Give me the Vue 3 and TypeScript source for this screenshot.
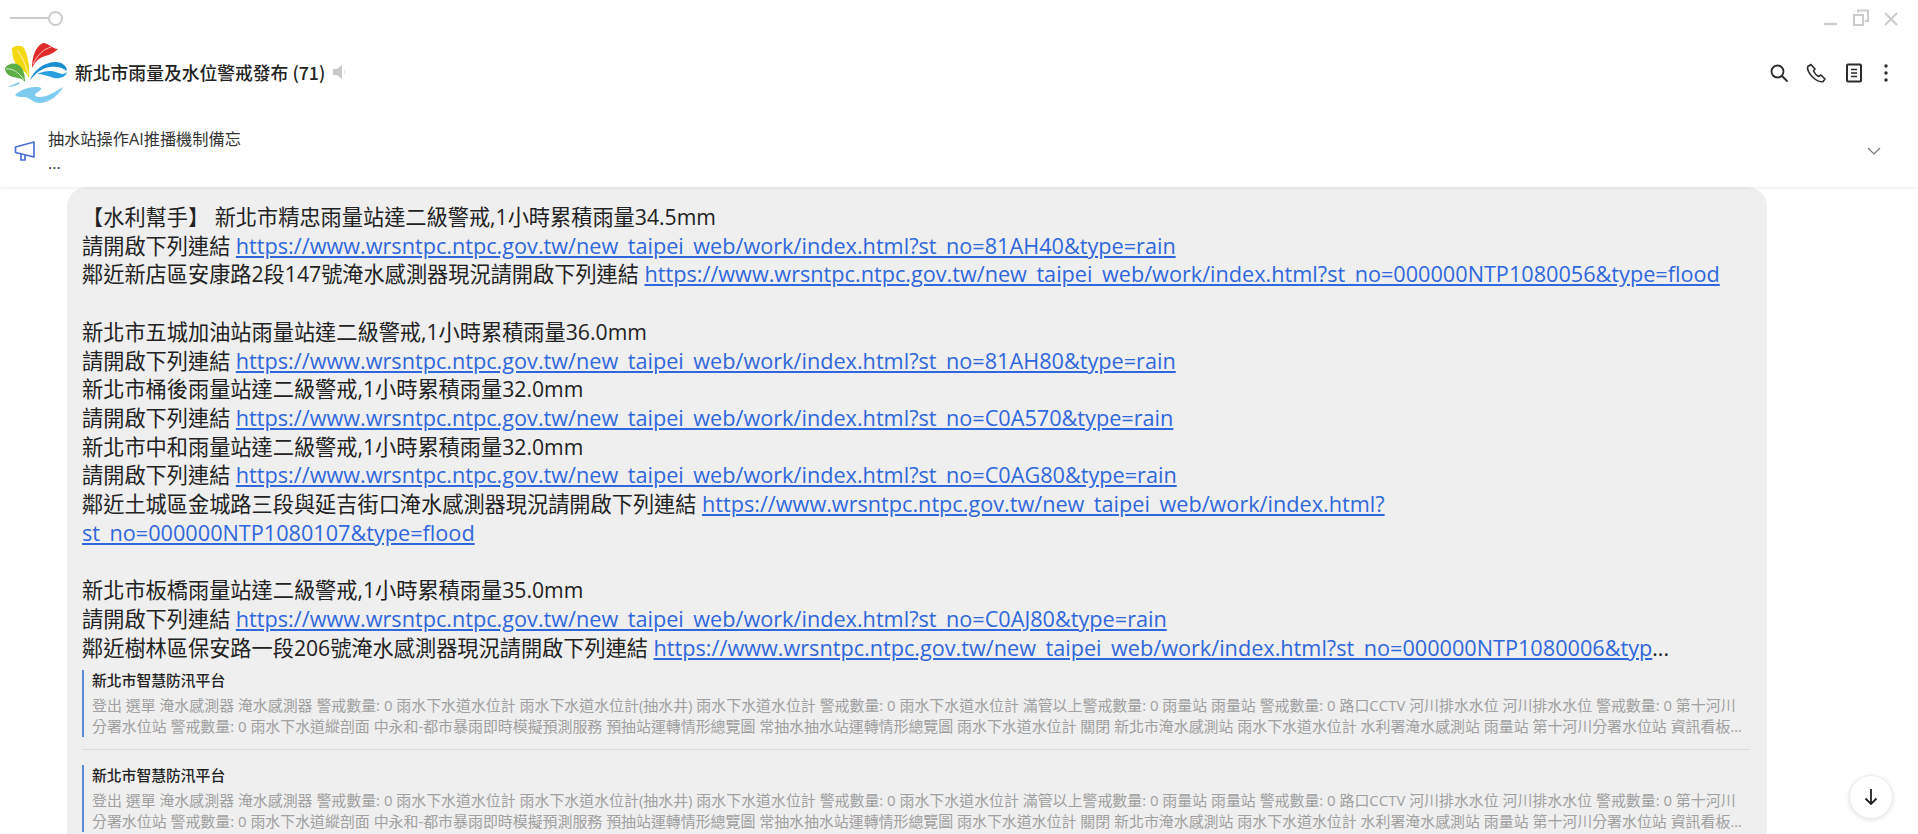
<script setup lang="ts">
const base = 'https://www.wrsntpc.ntpc.gov.tw/new_taipei_web/work/index.html?'

interface Line {
  text: string
  url?: string
  tail?: string
}

const lines: Line[] = [
  { text: '【水利幫手】 新北市精忠雨量站達二級警戒,1小時累積雨量34.5mm' },
  { text: '請開啟下列連結 ', url: base + 'st_no=81AH40&type=rain' },
  { text: '鄰近新店區安康路2段147號淹水感測器現況請開啟下列連結 ', url: base + 'st_no=000000NTP1080056&type=flood' },
  { text: '' },
  { text: '新北市五城加油站雨量站達二級警戒,1小時累積雨量36.0mm' },
  { text: '請開啟下列連結 ', url: base + 'st_no=81AH80&type=rain' },
  { text: '新北市桶後雨量站達二級警戒,1小時累積雨量32.0mm' },
  { text: '請開啟下列連結 ', url: base + 'st_no=C0A570&type=rain' },
  { text: '新北市中和雨量站達二級警戒,1小時累積雨量32.0mm' },
  { text: '請開啟下列連結 ', url: base + 'st_no=C0AG80&type=rain' },
  { text: '鄰近土城區金城路三段與延吉街口淹水感測器現況請開啟下列連結 ', url: base + 'st_no=000000NTP1080107&type=flood' },
  { text: '' },
  { text: '新北市板橋雨量站達二級警戒,1小時累積雨量35.0mm' },
  { text: '請開啟下列連結 ', url: base + 'st_no=C0AJ80&type=rain' },
  { text: '鄰近樹林區保安路一段206號淹水感測器現況請開啟下列連結 ', url: base + 'st_no=000000NTP1080006&typ', tail: '...' },
]

const previewText =
  '登出 選單 淹水感測器 淹水感測器 警戒數量: 0 雨水下水道水位計 雨水下水道水位計(抽水井) 雨水下水道水位計 警戒數量: 0 雨水下水道水位計 滿管以上警戒數量: 0 雨量站 雨量站 警戒數量: 0 路口CCTV 河川排水水位 河川排水水位 警戒數量: 0 第十河川分署水位站 警戒數量: 0 雨水下水道縱剖面 中永和-都市暴雨即時模擬預測服務 預抽站運轉情形總覽圖 常抽水抽水站運轉情形總覽圖 雨水下水道水位計 關閉 新北市淹水感測站 雨水下水道水位計 水利署淹水感測站 雨量站 第十河川分署水位站 資訊看板 河川排水水位 路口CCTV 雨水下水道水位計'

const cards = [0, 1]
</script>

<template>
  <div class="page">
    <header class="top">
      <div class="window-bar">
        <div class="slider"><span class="slider-track"></span><span class="slider-knob"></span></div>
        <div class="window-controls">
          <svg width="18" height="18" viewBox="0 0 18 18"><path d="M2 15h13" stroke="#ccc" stroke-width="2.4" fill="none" /></svg>
          <svg width="18" height="18" viewBox="0 0 18 18" fill="none" stroke="#ccc" stroke-width="2"><rect x="2" y="6" width="9" height="10" /><path d="M6 3.500V1.500h10V12h-3" /></svg>
          <svg width="18" height="18" viewBox="0 0 18 18" fill="none" stroke="#ccc" stroke-width="2"><path d="M3 4l12 12M15 4l-12 12" /></svg>
        </div>
      </div>

      <div class="title-row">
        <svg class="logo" width="70" height="70" viewBox="0 37 70 70">
          <path d="M12 48C16 45 22 45 24 48C28 55 30 68 29 78C27 72 22 70 18 67C14 63 12 55 12 48z" fill="#f5d90f" />
          <path d="M17 50C22 56 26 66 28 74" stroke="#fff" stroke-width="0.7" fill="none" />
          <path d="M58 49C52 49 49 43 43 43C36 46 32 56 32 68C36 60 40 58 45 56C50 55 55 52 58 49z" fill="#e02b2b" />
          <path d="M51 47C44 49 38 54 33 64" stroke="#fff" stroke-width="0.7" fill="none" />
          <path d="M5 68C8 63 16 62 20 66C24 70 25 76 25 82C22 78 18 78 13 77C9 76 5 73 5 68z" fill="#5cae45" />
          <path d="M6 69C12 68 19 72 24 80" stroke="#fff" stroke-width="0.7" fill="none" />
          <path d="M30 80C34 70 44 62 56 62C62 62 67 66 67 71C62 67 56 66 50 67C42 68 36 73 30 80z" fill="#1c8fd1" />
          <path d="M37 74C44 71 50 70 56 72C60 74 64 75 67 72C66 77 60 79 54 78C48 76 42 74 37 74z" fill="#2a9fe0" />
          <path d="M8 87C12 85 16 83 20 82L19 84C16 85 12 87 8 87z" fill="#7cc7ec" />
          <path d="M15 95C20 90 28 87 36 87C42 87 43 89 38 92C34 94 34 96 38 97C45 98 55 92 63 87C59 95 50 102 41 103C34 104 30 97 24 97C20 97 17 97 15 95z" fill="#7ecbf1" />
        </svg>
        <div class="title">新北市雨量及水位警戒發布 (71)</div>
        <svg class="speaker" width="16" height="16" viewBox="0 0 16 16"><path d="M1 5h4l5-4v14l-5-4H1z" fill="#c8c8c8" /><path d="M12 6c1 1 1 3 0 4" stroke="#ddd" fill="none" stroke-width="1" /></svg>
        <div class="actions">
          <svg width="22" height="22" viewBox="0 0 22 22" fill="none" stroke="#2b2b2b" stroke-width="1.8"><circle cx="9.500" cy="9.500" r="6" /><path d="M14 14l5 5" stroke-linecap="round" /></svg>
          <svg width="22" height="22" viewBox="0 0 22 22" fill="none" stroke="#2b2b2b" stroke-width="1.6" stroke-linejoin="round"><path d="M6 2.500L2.800 4.500C2 7 3.500 10.500 7 14.500c3.500 3.500 7 6 11 5l2-2.500-4-4-2.500 1.500c-2-1-4-3.500-5-5.500L10 7z" /></svg>
          <svg width="22" height="22" viewBox="0 0 22 22" fill="none" stroke="#2b2b2b"><rect x="4" y="2.500" width="14" height="17" rx="1" stroke-width="2" /><path d="M8 7.500h6M8 11h6M8 14.500h6" stroke-width="1.300" /></svg>
          <svg class="more" width="6" height="22" viewBox="0 0 6 22" fill="#2b2b2b"><circle cx="3" cy="4" r="1.700" /><circle cx="3" cy="11" r="1.700" /><circle cx="3" cy="18" r="1.700" /></svg>
        </div>
      </div>

      <div class="notice">
        <svg class="notice-icon" width="22" height="22" viewBox="0 0 22 22" fill="none" stroke="#4a6fd8" stroke-width="1.700"><path d="M1.500 7L20 2v15L1.500 12.500z" stroke-linejoin="round" /><path d="M7 14v6h4v-5" /></svg>
        <div class="notice-text">
          <div>抽水站操作AI推播機制備忘</div>
          <div>...</div>
        </div>
        <svg class="notice-arrow" width="14" height="8" viewBox="0 0 14 8" fill="none" stroke="#777" stroke-width="1.200"><path d="M1 1l6 6 6-6" /></svg>
      </div>
    </header>

    <main class="chat">
      <section class="bubble">
        <div class="message">
          <div v-for="(line, i) in lines" :key="i" class="msg-line">
            <template v-if="line.text">{{ line.text }}<a v-if="line.url" class="link">{{ line.url }}</a>{{ line.tail }}</template>
            <br v-else />
          </div>
        </div>
        <article v-for="c in cards" :key="c" class="card" :class="{ divided: c === 0 }">
          <div class="card-inner">
            <div class="card-title">新北市智慧防汛平台</div>
            <div class="card-desc">{{ previewText }}</div>
          </div>
        </article>
      </section>
      <button class="down">
        <svg width="20" height="20" viewBox="0 0 20 20" fill="none" stroke="#222" stroke-width="1.800"><path d="M10 2v15M4.500 11.500L10 17l5.500-5.500" /></svg>
      </button>
    </main>
  </div>
</template>

<style scoped>
.page {
  width: 1918px;
  height: 834px;
  overflow: hidden;
  background: #fff;
  font-family: "Open Sans", "Noto Sans CJK TC", sans-serif;
  color: #222;
  display: flex;
  flex-direction: column;
}
.top {
  height: 187px;
  flex: none;
  box-shadow: 0 1px 3px rgba(0, 0, 0, 0.08);
  position: relative;
  z-index: 1;
}
.window-bar {
  height: 36px;
  display: flex;
  justify-content: space-between;
  align-items: center;
  padding: 0 18px 0 10px;
}
.slider {
  display: flex;
  align-items: center;
}
.slider-track {
  width: 38px;
  height: 2px;
  background: #ccc;
}
.slider-knob {
  width: 15px;
  height: 15px;
  border: 2px solid #ccc;
  border-radius: 50%;
  box-sizing: border-box;
}
.window-controls {
  display: flex;
  gap: 12px;
}
.title-row {
  height: 72px;
  display: flex;
  align-items: center;
  padding-right: 29px;
}
.title {
  font-family: "Noto Sans CJK TC", sans-serif;
  font-size: 17.800px;
  font-weight: 500;
  margin-left: 5px;
  color: #222;
}
.speaker {
  margin-left: 7px;
}
.actions {
  margin-left: auto;
  padding-top: 2px;
  display: flex;
  align-items: center;
  gap: 15.500px;
}
.more {
  margin-left: 3px;
}
.notice {
  display: flex;
  align-items: center;
  height: 79px;
  box-sizing: border-box;
  padding: 6px 37px 0 14px;
}
.notice-text {
  margin-left: 12px;
  font-size: 16.200px;
  line-height: 24px;
  color: #333;
}
.notice-arrow {
  margin-left: auto;
}
.chat {
  flex: 1;
  min-height: 0;
  overflow: hidden;
  display: flex;
  align-items: flex-start;
  padding-left: 67px;
  position: relative;
}
.bubble {
  width: 1700px;
  flex: none;
  background: #efefef;
  border-radius: 20px;
  padding: 16px 17px 0 15px;
  box-sizing: border-box;
  height: 700px;
}
.message {
  font-size: 21.200px;
  line-height: 28.700px;
  color: #222;
}
.link {
  color: #2f68dc;
  font-size: 21.660px;
  line-height: 1;
  text-decoration: underline;
}
.msg-line {
  min-height: 28.700px;
}
.card {
  margin-top: 15px;
}
.card.divided {
  margin-top: 8px;
  padding-bottom: 12px;
  border-bottom: 1px solid #ddd;
}
.card-inner {
  border-left: 2px solid #5b8bd4;
  padding: 0 2px 0 8px;
}
.card-title {
  font-size: 14.800px;
  font-weight: 500;
  line-height: 21px;
  margin-bottom: 4px;
  color: #222;
}
.card-desc {
  font-size: 14.930px;
  line-height: 21px;
  color: #a0a0a0;
  display: -webkit-box;
  -webkit-line-clamp: 2;
  -webkit-box-orient: vertical;
  overflow: hidden;
}
.down {
  position: absolute;
  right: 25px;
  bottom: 15px;
  width: 44px;
  height: 44px;
  border-radius: 50%;
  border: 1px solid #eee;
  background: #fff;
  box-shadow: 0 1px 4px rgba(0, 0, 0, 0.12);
  display: flex;
  align-items: center;
  justify-content: center;
  padding: 0;
}
</style>
